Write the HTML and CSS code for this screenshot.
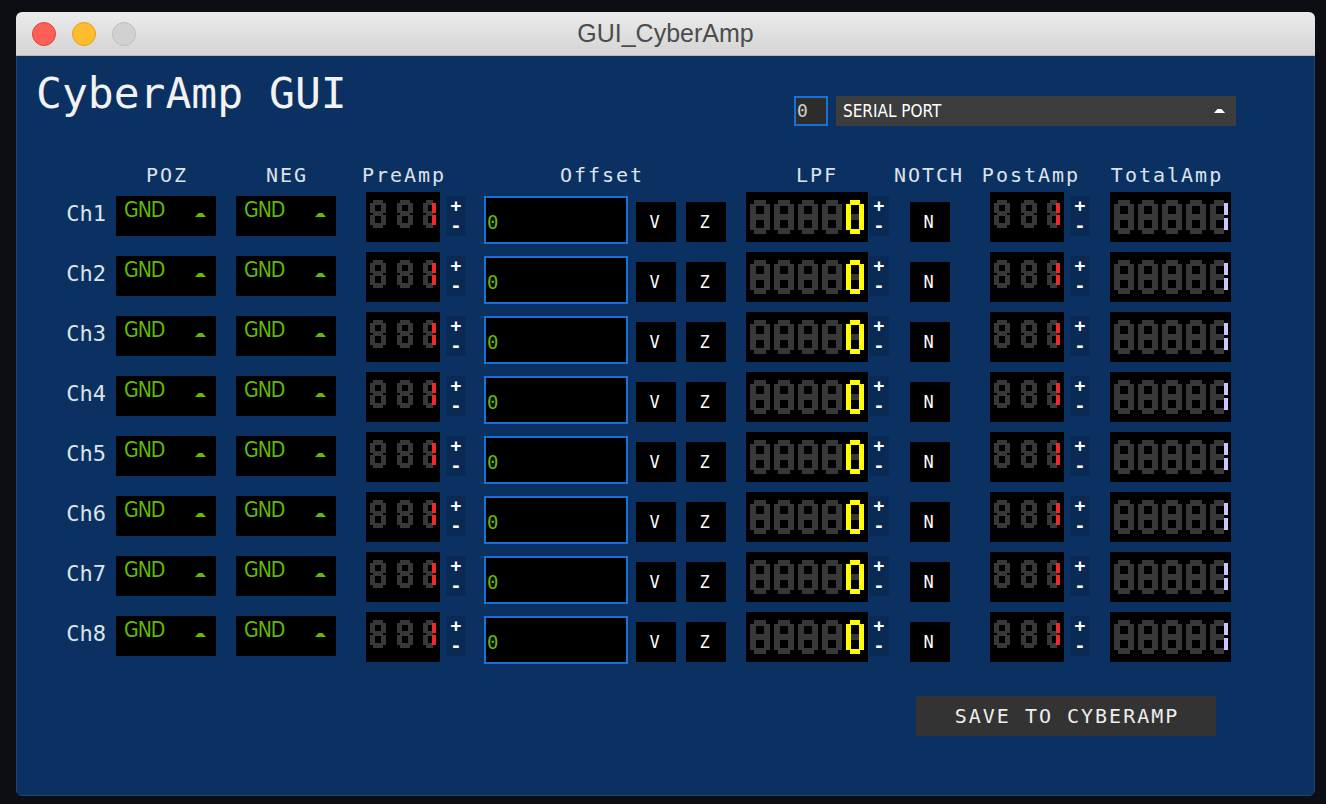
FILE: index.html
```html
<!DOCTYPE html>
<html>
<head>
<meta charset="utf-8">
<title>GUI_CyberAmp</title>
<link rel="stylesheet" href="styles.css">
</head>
<body>
<svg class="defs" width="0" height="0" aria-hidden="true">
  <defs>
    <g id="s8" fill="#383838">
      <rect x="3" y="0" width="10" height="5"/>
      <rect x="0" y="3" width="5" height="10"/>
      <rect x="11" y="3" width="5" height="10"/>
      <rect x="3" y="11" width="10" height="5"/>
      <rect x="0" y="15" width="5" height="10"/>
      <rect x="11" y="15" width="5" height="10"/>
      <rect x="3" y="23" width="10" height="5"/>
    </g>
    <g id="s1r">
      <g fill="#383838">
        <rect x="3" y="0" width="7" height="5"/>
        <rect x="0" y="3" width="5" height="10"/>
        <rect x="3" y="11" width="7" height="5"/>
        <rect x="0" y="15" width="5" height="10"/>
        <rect x="3" y="23" width="7" height="5"/>
      </g>
      <g fill="#ec2a2a">
        <rect x="9" y="3" width="4" height="10"/>
        <rect x="9" y="15" width="4" height="10"/>
      </g>
    </g>
    <g id="b8" fill="#383838">
      <rect x="4" y="0" width="12" height="6"/>
      <rect x="0" y="4" width="6" height="13"/>
      <rect x="14" y="4" width="6" height="13"/>
      <rect x="4" y="14" width="12" height="6"/>
      <rect x="0" y="17" width="6" height="13"/>
      <rect x="14" y="17" width="6" height="13"/>
      <rect x="4" y="28" width="12" height="6"/>
    </g>
    <g id="y0">
      <g fill="#ffff00">
        <rect x="4" y="0" width="10" height="5"/>
        <rect x="0" y="4" width="5" height="13"/>
        <rect x="13" y="4" width="5" height="13"/>
        <rect x="0" y="17" width="5" height="13"/>
        <rect x="13" y="17" width="5" height="13"/>
        <rect x="4" y="29" width="10" height="5"/>
      </g>
      <rect fill="#383838" x="5" y="14" width="8" height="6"/>
    </g>
    <g id="l1">
      <g fill="#383838">
        <rect x="4" y="0" width="10" height="6"/>
        <rect x="0" y="4" width="6" height="13"/>
        <rect x="4" y="14" width="10" height="6"/>
        <rect x="0" y="17" width="6" height="13"/>
        <rect x="4" y="28" width="10" height="6"/>
      </g>
      <g fill="#c8c8ff">
        <rect x="14" y="3" width="4" height="12"/>
        <rect x="14" y="18" width="4" height="12"/>
      </g>
    </g>
    <g id="dpre">
      <rect width="74" height="50" fill="#000"/>
      <use href="#s8" x="4" y="8"/>
      <use href="#s8" x="31" y="8"/>
      <use href="#s1r" x="57" y="8"/>
    </g>
    <g id="dlpf">
      <rect width="122" height="50" fill="#000"/>
      <use href="#b8" x="4" y="8"/>
      <use href="#b8" x="28" y="8"/>
      <use href="#b8" x="52" y="8"/>
      <use href="#b8" x="76" y="8"/>
      <use href="#y0" x="100" y="8"/>
    </g>
    <g id="dtot">
      <rect width="121" height="50" fill="#000"/>
      <use href="#b8" x="4" y="8"/>
      <use href="#b8" x="28" y="8"/>
      <use href="#b8" x="52" y="8"/>
      <use href="#b8" x="76" y="8"/>
      <use href="#l1" x="100" y="8"/>
    </g>
    <polygon id="tri" points="0,5 3.5,1 7.5,1 11,5"/>
  </defs>
</svg>

<div class="window">
  <div class="titlebar">
    <div class="lights">
      <span class="light red"></span>
      <span class="light yellow"></span>
      <span class="light grey"></span>
    </div>
    <div class="wtitle">GUI_CyberAmp</div>
    <div></div>
  </div>

  <div class="content">
    <div class="top">
      <div class="apptitle">CyberAmp GUI</div>
      <div class="serial">
        <div class="portnum">0</div>
        <div class="portdd"><span>SERIAL PORT</span><svg class="tri-w" viewBox="0 0 11 5"><use href="#tri"/></svg></div>
      </div>
    </div>

    <div class="hdr">
      <div class="h h-poz">POZ</div>
      <div class="h h-neg">NEG</div>
      <div class="h h-pre">PreAmp</div>
      <div class="h h-off">Offset</div>
      <div class="h h-lpf">LPF</div>
      <div class="h h-notch">NOTCH</div>
      <div class="h h-post">PostAmp</div>
      <div class="h h-tot">TotalAmp</div>
    </div>

    <div class="grid">
      <!-- Ch1 -->
      <div class="ch">Ch1</div>
      <div class="dd"><span class="gnd">GND</span><svg class="tri-g" viewBox="0 0 11 5"><use href="#tri"/></svg></div>
      <div class="dd"><span class="gnd">GND</span><svg class="tri-g" viewBox="0 0 11 5"><use href="#tri"/></svg></div>
      <svg class="disp ds" viewBox="0 0 74 50"><use href="#dpre"/></svg>
      <div class="pm"><span>+</span><span>-</span></div>
      <div class="off">0</div>
      <div class="sq">V</div>
      <div class="sq">Z</div>
      <svg class="disp dl" viewBox="0 0 122 50"><use href="#dlpf"/></svg>
      <div class="pm"><span>+</span><span>-</span></div>
      <div class="sq">N</div>
      <svg class="disp ds" viewBox="0 0 74 50"><use href="#dpre"/></svg>
      <div class="pm"><span>+</span><span>-</span></div>
      <svg class="disp dt" viewBox="0 0 121 50"><use href="#dtot"/></svg>
      <!-- Ch2 -->
      <div class="ch">Ch2</div>
      <div class="dd"><span class="gnd">GND</span><svg class="tri-g" viewBox="0 0 11 5"><use href="#tri"/></svg></div>
      <div class="dd"><span class="gnd">GND</span><svg class="tri-g" viewBox="0 0 11 5"><use href="#tri"/></svg></div>
      <svg class="disp ds" viewBox="0 0 74 50"><use href="#dpre"/></svg>
      <div class="pm"><span>+</span><span>-</span></div>
      <div class="off">0</div>
      <div class="sq">V</div>
      <div class="sq">Z</div>
      <svg class="disp dl" viewBox="0 0 122 50"><use href="#dlpf"/></svg>
      <div class="pm"><span>+</span><span>-</span></div>
      <div class="sq">N</div>
      <svg class="disp ds" viewBox="0 0 74 50"><use href="#dpre"/></svg>
      <div class="pm"><span>+</span><span>-</span></div>
      <svg class="disp dt" viewBox="0 0 121 50"><use href="#dtot"/></svg>
      <!-- Ch3 -->
      <div class="ch">Ch3</div>
      <div class="dd"><span class="gnd">GND</span><svg class="tri-g" viewBox="0 0 11 5"><use href="#tri"/></svg></div>
      <div class="dd"><span class="gnd">GND</span><svg class="tri-g" viewBox="0 0 11 5"><use href="#tri"/></svg></div>
      <svg class="disp ds" viewBox="0 0 74 50"><use href="#dpre"/></svg>
      <div class="pm"><span>+</span><span>-</span></div>
      <div class="off">0</div>
      <div class="sq">V</div>
      <div class="sq">Z</div>
      <svg class="disp dl" viewBox="0 0 122 50"><use href="#dlpf"/></svg>
      <div class="pm"><span>+</span><span>-</span></div>
      <div class="sq">N</div>
      <svg class="disp ds" viewBox="0 0 74 50"><use href="#dpre"/></svg>
      <div class="pm"><span>+</span><span>-</span></div>
      <svg class="disp dt" viewBox="0 0 121 50"><use href="#dtot"/></svg>
      <!-- Ch4 -->
      <div class="ch">Ch4</div>
      <div class="dd"><span class="gnd">GND</span><svg class="tri-g" viewBox="0 0 11 5"><use href="#tri"/></svg></div>
      <div class="dd"><span class="gnd">GND</span><svg class="tri-g" viewBox="0 0 11 5"><use href="#tri"/></svg></div>
      <svg class="disp ds" viewBox="0 0 74 50"><use href="#dpre"/></svg>
      <div class="pm"><span>+</span><span>-</span></div>
      <div class="off">0</div>
      <div class="sq">V</div>
      <div class="sq">Z</div>
      <svg class="disp dl" viewBox="0 0 122 50"><use href="#dlpf"/></svg>
      <div class="pm"><span>+</span><span>-</span></div>
      <div class="sq">N</div>
      <svg class="disp ds" viewBox="0 0 74 50"><use href="#dpre"/></svg>
      <div class="pm"><span>+</span><span>-</span></div>
      <svg class="disp dt" viewBox="0 0 121 50"><use href="#dtot"/></svg>
      <!-- Ch5 -->
      <div class="ch">Ch5</div>
      <div class="dd"><span class="gnd">GND</span><svg class="tri-g" viewBox="0 0 11 5"><use href="#tri"/></svg></div>
      <div class="dd"><span class="gnd">GND</span><svg class="tri-g" viewBox="0 0 11 5"><use href="#tri"/></svg></div>
      <svg class="disp ds" viewBox="0 0 74 50"><use href="#dpre"/></svg>
      <div class="pm"><span>+</span><span>-</span></div>
      <div class="off">0</div>
      <div class="sq">V</div>
      <div class="sq">Z</div>
      <svg class="disp dl" viewBox="0 0 122 50"><use href="#dlpf"/></svg>
      <div class="pm"><span>+</span><span>-</span></div>
      <div class="sq">N</div>
      <svg class="disp ds" viewBox="0 0 74 50"><use href="#dpre"/></svg>
      <div class="pm"><span>+</span><span>-</span></div>
      <svg class="disp dt" viewBox="0 0 121 50"><use href="#dtot"/></svg>
      <!-- Ch6 -->
      <div class="ch">Ch6</div>
      <div class="dd"><span class="gnd">GND</span><svg class="tri-g" viewBox="0 0 11 5"><use href="#tri"/></svg></div>
      <div class="dd"><span class="gnd">GND</span><svg class="tri-g" viewBox="0 0 11 5"><use href="#tri"/></svg></div>
      <svg class="disp ds" viewBox="0 0 74 50"><use href="#dpre"/></svg>
      <div class="pm"><span>+</span><span>-</span></div>
      <div class="off">0</div>
      <div class="sq">V</div>
      <div class="sq">Z</div>
      <svg class="disp dl" viewBox="0 0 122 50"><use href="#dlpf"/></svg>
      <div class="pm"><span>+</span><span>-</span></div>
      <div class="sq">N</div>
      <svg class="disp ds" viewBox="0 0 74 50"><use href="#dpre"/></svg>
      <div class="pm"><span>+</span><span>-</span></div>
      <svg class="disp dt" viewBox="0 0 121 50"><use href="#dtot"/></svg>
      <!-- Ch7 -->
      <div class="ch">Ch7</div>
      <div class="dd"><span class="gnd">GND</span><svg class="tri-g" viewBox="0 0 11 5"><use href="#tri"/></svg></div>
      <div class="dd"><span class="gnd">GND</span><svg class="tri-g" viewBox="0 0 11 5"><use href="#tri"/></svg></div>
      <svg class="disp ds" viewBox="0 0 74 50"><use href="#dpre"/></svg>
      <div class="pm"><span>+</span><span>-</span></div>
      <div class="off">0</div>
      <div class="sq">V</div>
      <div class="sq">Z</div>
      <svg class="disp dl" viewBox="0 0 122 50"><use href="#dlpf"/></svg>
      <div class="pm"><span>+</span><span>-</span></div>
      <div class="sq">N</div>
      <svg class="disp ds" viewBox="0 0 74 50"><use href="#dpre"/></svg>
      <div class="pm"><span>+</span><span>-</span></div>
      <svg class="disp dt" viewBox="0 0 121 50"><use href="#dtot"/></svg>
      <!-- Ch8 -->
      <div class="ch">Ch8</div>
      <div class="dd"><span class="gnd">GND</span><svg class="tri-g" viewBox="0 0 11 5"><use href="#tri"/></svg></div>
      <div class="dd"><span class="gnd">GND</span><svg class="tri-g" viewBox="0 0 11 5"><use href="#tri"/></svg></div>
      <svg class="disp ds" viewBox="0 0 74 50"><use href="#dpre"/></svg>
      <div class="pm"><span>+</span><span>-</span></div>
      <div class="off">0</div>
      <div class="sq">V</div>
      <div class="sq">Z</div>
      <svg class="disp dl" viewBox="0 0 122 50"><use href="#dlpf"/></svg>
      <div class="pm"><span>+</span><span>-</span></div>
      <div class="sq">N</div>
      <svg class="disp ds" viewBox="0 0 74 50"><use href="#dpre"/></svg>
      <div class="pm"><span>+</span><span>-</span></div>
      <svg class="disp dt" viewBox="0 0 121 50"><use href="#dtot"/></svg>
    </div>

    <div class="save">SAVE TO CYBERAMP</div>
  </div>
</div>
</body>
</html>
```

FILE: styles.css
```css
* { box-sizing: border-box; }

html, body {
  margin: 0;
  padding: 0;
}

body {
  width: 1326px;
  height: 804px;
  overflow: hidden;
  background: #0c0e13;
  font-family: "DejaVu Sans Mono", monospace;
}

.defs {
  position: absolute;
  width: 0;
  height: 0;
  overflow: hidden;
}

.window {
  margin: 12px 0 0 16px;
  width: 1299px;
  height: 784px;
  border-radius: 6px;
  overflow: hidden;
  display: flex;
  flex-direction: column;
}

.titlebar {
  height: 44px;
  flex: none;
  border-bottom: 1px solid #b8b8b8;
  background: linear-gradient(#ebebeb, #d4d4d4);
  display: grid;
  grid-template-columns: 1fr auto 1fr;
  align-items: center;
}

.lights {
  display: flex;
  gap: 16px;
  margin-left: 16px;
}

.light {
  width: 24px;
  height: 24px;
  border-radius: 50%;
  border: 1px solid transparent;
}

.light.red { background: #fe5f57; border-color: #e1443c; }
.light.yellow { background: #febc2e; border-color: #dfa023; }
.light.grey { background: #d1d1d1; border-color: #bdbdbd; }

.wtitle {
  font-family: "Liberation Sans", Arial, sans-serif;
  font-size: 25px;
  color: #4c4c4c;
  line-height: 1;
}

.content {
  flex: 1;
  background: #0b3162;
  padding-top: 16px;
  box-shadow: inset 1px 0 #1b4676, inset -1px 0 #1b4676, inset 0 -1px #1b4676;
}

.top {
  display: flex;
  height: 88px;
}

.apptitle {
  margin-left: 20px;
  font-family: "DejaVu Sans Mono", monospace;
  font-size: 43px;
  line-height: 43px;
  color: #f2f2f2;
}

.serial {
  margin-left: auto;
  margin-right: 79px;
  margin-top: 24px;
  display: flex;
  gap: 8px;
  height: 30px;
}

.portnum {
  width: 34px;
  height: 30px;
  border: 2px solid #1a70d4;
  background: #2c2c2c;
  color: #d0d0d0;
  font-family: "DejaVu Sans Mono", monospace;
  font-size: 18px;
  line-height: 26px;
  padding-left: 1px;
}

.portdd {
  width: 400px;
  height: 30px;
  background: #3c3c3c;
  display: flex;
  align-items: center;
  justify-content: space-between;
  padding: 0 11px 0 7px;
  color: #ffffff;
  font-family: "DejaVu Sans Condensed", "Liberation Sans Narrow", "DejaVu Sans", sans-serif;
  font-size: 17px;
}

.tri-w {
  width: 11px;
  height: 5px;
  fill: #ffffff;
  margin-top: -2px;
}

.hdr,
.grid {
  display: grid;
  grid-template-columns: 100px 120px 130px 80px 38px 152px 50px 60px 123px 41px 80px 80px 40px 121px;
  justify-items: start;
  align-items: start;
}

.hdr {
  height: 30px;
}

.h {
  height: 30px;
  line-height: 30px;
  display: flex;
  justify-content: center;
  white-space: nowrap;
  padding-left: 2px;
  font-family: "DejaVu Sans Mono", monospace;
  font-size: 20px;
  letter-spacing: 2px;
  color: #dde3ea;
}

.h-poz { grid-column: 2; width: 100px; }
.h-neg { grid-column: 3; width: 100px; }
.h-pre { grid-column: 4 / span 2; width: 74px; }
.h-off { grid-column: 6 / span 3; width: 234px; }
.h-lpf { grid-column: 9 / span 2; width: 140px; }
.h-notch { grid-column: 11; width: 36px; }
.h-post { grid-column: 12 / span 2; width: 80px; }
.h-tot { grid-column: 14; width: 112px; }

.grid {
  margin-top: 2px;
  grid-auto-rows: 60px;
}

.ch {
  justify-self: end;
  padding-right: 10px;
  height: 44px;
  line-height: 44px;
  font-family: "DejaVu Sans Mono", monospace;
  font-size: 22px;
  color: #dde3ea;
}

.dd {
  margin-top: 4px;
  width: 100px;
  height: 40px;
  background: #000;
  display: flex;
  justify-content: space-between;
  align-items: flex-start;
  padding: 4px 10px 0 8px;
}

.gnd {
  font-family: "DejaVu Sans Condensed", "Liberation Sans Narrow", "DejaVu Sans", sans-serif;
  font-size: 21px;
  line-height: 21px;
  letter-spacing: -1px;
  color: #62bb00;
}

.tri-g {
  width: 11px;
  height: 5px;
  margin-top: 12px;
  fill: #62bb00;
}

.disp {
  display: block;
  height: 50px;
}

.ds { width: 74px; }
.dl { width: 122px; }
.dt { width: 121px; }

.pm {
  margin-top: 4px;
  width: 20px;
  height: 40px;
  background: #092a55;
  display: flex;
  flex-direction: column;
  align-items: center;
  color: #ffffff;
  font-family: "DejaVu Sans Mono", monospace;
  font-weight: bold;
  font-size: 18px;
  line-height: 20px;
}

.off {
  margin-top: 4px;
  width: 144px;
  height: 48px;
  background: #000;
  border: 2px solid #1a70d4;
  display: flex;
  align-items: center;
  padding: 3px 0 0 1px;
  font-family: "DejaVu Sans Mono", monospace;
  font-size: 19px;
  color: #62bb00;
}

.sq {
  margin-top: 10px;
  width: 40px;
  height: 40px;
  background: #000;
  display: flex;
  align-items: center;
  justify-content: center;
  padding-right: 3px;
  color: #ffffff;
  font-family: "DejaVu Sans Mono", monospace;
  font-size: 17px;
}

.save {
  margin: 24px 0 0 900px;
  width: 300px;
  height: 40px;
  background: #333333;
  display: flex;
  align-items: center;
  justify-content: center;
  padding-left: 2px;
  color: #eeeeee;
  font-family: "DejaVu Sans Mono", monospace;
  font-size: 20px;
  letter-spacing: 2px;
}
```
